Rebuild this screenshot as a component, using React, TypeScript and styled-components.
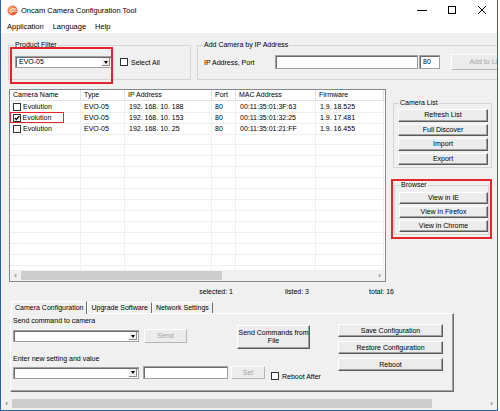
import React from 'react';
import styled, { createGlobalStyle } from 'styled-components';

const GlobalStyle = createGlobalStyle`
  html, body {
    margin: 0;
    padding: 0;
    background: #fff;
  }
  body {
    font-family: "Liberation Sans", Arial, sans-serif;
    font-size: 7px;
    color: #000;
  }
  * {
    box-sizing: border-box;
  }
`;

const Window = styled.div`
  width: 498px;
  height: 411px;
  border: 1px solid #2b64ad;
  border-top: none;
  display: flex;
  flex-direction: column;
  overflow: hidden;
  background: #f0f0f0;
`;

const TitleBar = styled.div`
  height: 20px;
  flex-shrink: 0;
  display: flex;
  align-items: center;
  padding-left: 6px;
  background: #fff;
`;

const TitleText = styled.span`
  font-size: 7.5px;
  margin-left: 3px;
`;

const Controls = styled.div`
  margin-left: auto;
  display: flex;
  height: 100%;
`;

const ControlButton = styled.div`
  width: 30px;
  height: 100%;
  display: flex;
  align-items: center;
  justify-content: center;
`;

const MenuBar = styled.div`
  height: 13px;
  flex-shrink: 0;
  display: flex;
  align-items: center;
  padding-left: 2px;
  background: #fff;
`;

const MenuItem = styled.span`
  font-size: 7.5px;
  padding: 0 4px;
`;

const Body = styled.div`
  flex: 1;
  min-height: 0;
  display: flex;
  flex-direction: column;
  overflow: hidden;
`;

const TopRow = styled.div`
  display: flex;
  gap: 6px;
  padding-left: 7px;
  margin-top: 8px;
  flex-shrink: 0;
`;

const GroupBox = styled.fieldset<{ $w: number; $h?: number }>`
  position: relative;
  margin: 0;
  padding: 0 3px;
  min-width: 0;
  flex-shrink: 0;
  width: ${(p) => p.$w}px;
  ${(p) => (p.$h ? `height: ${p.$h}px;` : '')}
  border: 1px solid #d5d5d5;
`;

const Legend = styled.legend`
  font-size: 7px;
  line-height: 8px;
  padding: 0 1px;
  margin-left: 2px;
`;

// red marker drawn over the product filter box
const Annotation = styled.div`
  position: absolute;
  left: 1px;
  top: -2px;
  width: 103px;
  height: 37px;
  border: 2px solid #e3262b;
  pointer-events: none;
`;

const FilterRow = styled.div`
  display: flex;
  align-items: center;
  margin-top: 7px;
  margin-left: 3px;
`;

const Combo = styled.div<{ $w: number }>`
  width: ${(p) => p.$w}px;
  height: 12px;
  display: flex;
  align-items: stretch;
  background: #fff;
  border: 1px solid #a0a0a0;
  box-shadow: inset 1px 1px #6d6d6d;
  flex-shrink: 0;
`;

const ComboText = styled.span`
  flex: 1;
  padding-left: 3px;
  line-height: 10px;
  font-size: 7px;
`;

const ComboArrow = styled.div`
  width: 9px;
  margin: 1px;
  background: #f0f0f0;
  border-left: 1px solid #fff;
  box-shadow: inset -1px -1px #8a8a8a;
  display: flex;
  align-items: center;
  justify-content: center;

  &::after {
    content: '';
    border-left: 2.5px solid transparent;
    border-right: 2.5px solid transparent;
    border-top: 3px solid #000;
  }
`;

const CheckLabel = styled.label<{ $gap?: number }>`
  display: flex;
  align-items: center;
  margin-left: ${(p) => p.$gap ?? 0}px;
  font-size: 7px;
  gap: 3px;
`;

const Box = styled.span`
  width: 8px;
  height: 8px;
  background: #fff;
  border: 1px solid #333;
  display: inline-flex;
  align-items: center;
  justify-content: center;
  flex-shrink: 0;
`;

const AddRow = styled.div`
  display: flex;
  align-items: center;
  margin-top: 5px;
  margin-left: 3px;
`;

const FieldLabel = styled.span`
  width: 71px;
  font-size: 7px;
`;

const TextInput = styled.div<{ $w: number; $h?: number }>`
  width: ${(p) => p.$w}px;
  height: ${(p) => p.$h ?? 14}px;
  background: #fff;
  border: 1px solid #a0a0a0;
  box-shadow: inset 1px 1px #6d6d6d;
  padding-left: 3px;
  line-height: 12px;
  font-size: 7px;
  flex-shrink: 0;
`;

const Button = styled.div<{ $w: number; $h?: number; $disabled?: boolean }>`
  width: ${(p) => p.$w}px;
  height: ${(p) => p.$h ?? 13}px;
  flex-shrink: 0;
  display: flex;
  align-items: center;
  justify-content: center;
  text-align: center;
  line-height: 8px;
  font-size: 7px;
  color: ${(p) => (p.$disabled ? '#a3a3a3' : '#000')};
  background: #ececec;
  border: 1px solid;
  border-color: ${(p) =>
    p.$disabled ? '#fff #b5b5b5 #b5b5b5 #fff' : '#fff #5a5a5a #5a5a5a #fff'};
  box-shadow: ${(p) =>
    p.$disabled ? 'none' : 'inset -1px -1px #a0a0a0'};
`;

const MiddleRow = styled.div`
  display: flex;
  align-items: flex-start;
  padding-left: 8px;
  margin-top: 9px;
  flex-shrink: 0;
`;

const Table = styled.div`
  width: 377px;
  height: 193px;
  background: #fff;
  border: 1px solid #828790;
  display: flex;
  flex-direction: column;
  overflow: hidden;
  flex-shrink: 0;
`;

const COLS = '71px 44px 87px 24px 80px 68px 1fr';

const HeaderRow = styled.div`
  display: grid;
  grid-template-columns: ${COLS};
  height: 11px;
  flex-shrink: 0;
`;

const HeaderCell = styled.div`
  border-right: 1px solid #e3e3e3;
  border-bottom: 1px solid #e3e3e3;
  padding-left: 3px;
  line-height: 10px;
  font-size: 7px;
  white-space: nowrap;
`;

const Rows = styled.div`
  flex: 1;
  min-height: 0;
  overflow: hidden;
`;

const Row = styled.div`
  display: grid;
  grid-template-columns: ${COLS};
  height: 11px;
`;

const Cell = styled.div`
  border-right: 1px solid #efefef;
  border-bottom: 1px solid #efefef;
  padding-left: 4px;
  line-height: 10px;
  font-size: 7px;
  white-space: nowrap;
  display: flex;
  align-items: center;
`;

const NameCell = styled(Cell)`
  padding-left: 0;
`;

const NameBox = styled.div<{ $marked?: boolean }>`
  display: flex;
  align-items: center;
  gap: 2px;
  width: 54px;
  height: 11px;
  padding-left: 3px;
  border: ${(p) => (p.$marked ? '1.5px solid #e3262b' : 'none')};
  ${(p) => (p.$marked ? 'padding-left: 1.5px;' : '')}
`;

const HScroll = styled.div<{ $h: number }>`
  height: ${(p) => p.$h}px;
  flex-shrink: 0;
  display: flex;
  align-items: center;
  background: #f0f0f0;
`;

const ScrollArrow = styled.span`
  width: 11px;
  text-align: center;
  font-size: 8px;
  color: #555;
`;

const Thumb = styled.div<{ $w: number }>`
  width: ${(p) => p.$w}px;
  height: 9px;
  background: #cdcdcd;
`;

const Spacer = styled.div`
  flex: 1;
`;

const SideColumn = styled.div`
  display: flex;
  flex-direction: column;
  margin-left: 5px;
  margin-top: 10px;
`;

const ButtonStack = styled.div<{ $top: number; $gap: number }>`
  display: flex;
  flex-direction: column;
  gap: ${(p) => p.$gap}px;
  margin-top: ${(p) => p.$top}px;
  margin-left: 1px;
  padding-bottom: 2px;
`;

const SideGroup = styled(GroupBox)`
  margin-left: 2px;
`;

const RedFrame = styled.div`
  margin-top: 11px;
  border: 2px solid #e3262b;
  padding: 0 1px 2px 1px;
  width: 101px;
`;

const StatusRow = styled.div`
  display: grid;
  grid-template-columns: 232px 76px 85px;
  margin-top: 6px;
  line-height: 8px;
  font-size: 7px;
  flex-shrink: 0;
`;

const StatusCell = styled.span`
  text-align: right;
`;

const TabStrip = styled.div`
  display: flex;
  align-items: flex-end;
  height: 13px;
  margin-top: 4px;
  margin-left: 10px;
  flex-shrink: 0;
  position: relative;
  z-index: 1;
`;

const Tab = styled.div<{ $active?: boolean }>`
  height: ${(p) => (p.$active ? 13 : 11)}px;
  padding: 0 3px;
  line-height: ${(p) => (p.$active ? 12 : 10)}px;
  font-size: 7px;
  white-space: nowrap;
  background: #f0f0f0;
  border-top: 1px solid #fff;
  border-left: 1px solid #fff;
  border-right: 1px solid #6d6d6d;
  margin-bottom: ${(p) => (p.$active ? -1 : 0)}px;
`;

const Panel = styled.div`
  width: 444px;
  height: 79px;
  margin-left: 9px;
  flex-shrink: 0;
  border: 1px solid;
  border-color: #fff #6d6d6d #6d6d6d #fff;
  box-shadow: inset -1px -1px #a0a0a0;
  display: flex;
  padding-left: 2px;
`;

const PanelLeft = styled.div`
  width: 325px;
  display: flex;
  flex-direction: column;
`;

const Block = styled.div`
  display: flex;
  align-items: flex-start;
`;

const BlockColumn = styled.div`
  display: flex;
  flex-direction: column;
`;

const SmallLabel = styled.span<{ $top: number }>`
  margin-top: ${(p) => p.$top}px;
  line-height: 8px;
  font-size: 7px;
`;

const InlineRow = styled.div<{ $top: number }>`
  display: flex;
  align-items: center;
  margin-top: ${(p) => p.$top}px;
`;

const PanelRight = styled.div`
  display: flex;
  flex-direction: column;
  gap: 4px;
  margin-top: 10px;
`;

const BottomScroll = styled(HScroll)`
  margin-top: auto;
  margin-bottom: 1px;
`;

const AppIcon = () => (
  <svg width="11" height="11" viewBox="0 0 11 11">
    <defs>
      <radialGradient id="og" cx="0.35" cy="0.35" r="0.8">
        <stop offset="0" stopColor="#fbb36a" />
        <stop offset="1" stopColor="#e2381f" />
      </radialGradient>
    </defs>
    <circle cx="5.5" cy="5.5" r="5" fill="url(#og)" />
    <path d="M2 6.5 Q5 2.5 9.5 4" stroke="#fff" strokeWidth="0.9" fill="none" />
    <path d="M2.5 8.3 Q5.5 5 9.8 6.2" stroke="#fff" strokeWidth="0.8" fill="none" />
  </svg>
);

const CheckMark = () => (
  <svg width="6" height="6" viewBox="0 0 6 6">
    <path d="M0.8 3 L2.4 4.6 L5.3 1" stroke="#000" strokeWidth="1.2" fill="none" />
  </svg>
);

type Camera = {
  name: string;
  type: string;
  ip: string;
  port: string;
  mac: string;
  firmware: string;
  checked?: boolean;
};

const cameras: Camera[] = [
  { name: 'Evolution', type: 'EVO-05', ip: '192. 168. 10. 188', port: '80', mac: '00:11:35:01:3F:63', firmware: '1.9. 18.525' },
  { name: 'Evolution', type: 'EVO-05', ip: '192. 168. 10. 153', port: '80', mac: '00:11:35:01:32:25', firmware: '1.9. 17.481', checked: true },
  { name: 'Evolution', type: 'EVO-05', ip: '192. 168. 10. 25', port: '80', mac: '00:11:35:01:21:FF', firmware: '1.9. 16.455' },
];

const headers = ['Camera Name', 'Type', 'IP Address', 'Port', 'MAC Address', 'Firmware', ''];

const App = () => {
  const empty = Array.from({ length: 13 });

  return (
    <>
      <GlobalStyle />
      <Window>
        <TitleBar>
          <AppIcon />
          <TitleText>Oncam Camera Configuration Tool</TitleText>
          <Controls>
            <ControlButton>
              <svg width="10" height="10" viewBox="0 0 10 10">
                <line x1="0" y1="5.5" x2="10" y2="5.5" stroke="#000" strokeWidth="1" />
              </svg>
            </ControlButton>
            <ControlButton>
              <svg width="10" height="10" viewBox="0 0 10 10">
                <rect x="1.5" y="1.5" width="7" height="7" stroke="#000" strokeWidth="1" fill="none" />
              </svg>
            </ControlButton>
            <ControlButton>
              <svg width="10" height="10" viewBox="0 0 10 10">
                <path d="M1 1 L9 9 M9 1 L1 9" stroke="#000" strokeWidth="1" />
              </svg>
            </ControlButton>
          </Controls>
        </TitleBar>

        <MenuBar>
          <MenuItem>Application</MenuItem>
          <MenuItem style={{ marginLeft: 1 }}>Language</MenuItem>
          <MenuItem style={{ marginLeft: 1 }}>Help</MenuItem>
        </MenuBar>

        <Body>
          <TopRow>
            <GroupBox $w={183} $h={39}>
              <Legend>Product Filter</Legend>
              <Annotation />
              <FilterRow>
                <Combo $w={97}>
                  <ComboText>EVO-05</ComboText>
                  <ComboArrow />
                </Combo>
                <CheckLabel $gap={8}>
                  <Box />
                  Select All
                </CheckLabel>
              </FilterRow>
            </GroupBox>

            <GroupBox $w={330} $h={39}>
              <Legend>Add Camera by IP Address</Legend>
              <AddRow>
                <FieldLabel>IP Address, Port</FieldLabel>
                <TextInput $w={143} />
                <TextInput $w={21} style={{ marginLeft: 1 }}>80</TextInput>
                <Button $w={70} $h={16} $disabled style={{ marginLeft: 11 }}>
                  Add to List
                </Button>
              </AddRow>
            </GroupBox>
          </TopRow>

          <MiddleRow>
            <Table>
              <HeaderRow>
                {headers.map((h, i) => (
                  <HeaderCell key={i}>{h}</HeaderCell>
                ))}
              </HeaderRow>
              <Rows>
                {cameras.map((c) => (
                  <Row key={c.ip}>
                    <NameCell>
                      <NameBox $marked={c.checked}>
                        <Box>{c.checked && <CheckMark />}</Box>
                        {c.name}
                      </NameBox>
                    </NameCell>
                    <Cell style={{ paddingLeft: 3 }}>{c.type}</Cell>
                    <Cell>{c.ip}</Cell>
                    <Cell style={{ paddingLeft: 3 }}>{c.port}</Cell>
                    <Cell>{c.mac}</Cell>
                    <Cell>{c.firmware}</Cell>
                    <Cell />
                  </Row>
                ))}
                {empty.map((_, i) => (
                  <Row key={i}>
                    {headers.map((_, j) => (
                      <Cell key={j} />
                    ))}
                  </Row>
                ))}
              </Rows>
              <HScroll $h={11}>
                <ScrollArrow>‹</ScrollArrow>
                <Thumb $w={201} />
                <Spacer />
                <ScrollArrow>›</ScrollArrow>
              </HScroll>
            </Table>

            <SideColumn>
              <SideGroup $w={99}>
                <Legend>Camera List</Legend>
                <ButtonStack $top={2} $gap={2}>
                  <Button $w={90} $h={12.5}>Refresh List</Button>
                  <Button $w={90} $h={12.5}>Full Discover</Button>
                  <Button $w={90} $h={12.5}>Import</Button>
                  <Button $w={90} $h={12.5}>Export</Button>
                </ButtonStack>
              </SideGroup>

              <RedFrame>
                <GroupBox $w={95}>
                  <Legend>Browser</Legend>
                  <ButtonStack $top={3} $gap={2}>
                    <Button $w={89} $h={12}>View in IE</Button>
                    <Button $w={89} $h={12}>View in Firefox</Button>
                    <Button $w={89} $h={12}>View in Chrome</Button>
                  </ButtonStack>
                </GroupBox>
              </RedFrame>
            </SideColumn>
          </MiddleRow>

          <StatusRow>
            <StatusCell>selected: 1</StatusCell>
            <StatusCell>listed: 3</StatusCell>
            <StatusCell>total: 16</StatusCell>
          </StatusRow>

          <TabStrip>
            <Tab $active>Camera Configuration</Tab>
            <Tab>Upgrade Software</Tab>
            <Tab>Network Settings</Tab>
          </TabStrip>

          <Panel>
            <PanelLeft>
              <Block>
                <BlockColumn>
                  <SmallLabel $top={3}>Send command to camera</SmallLabel>
                  <InlineRow $top={4}>
                    <Combo $w={126}>
                      <ComboText />
                      <ComboArrow />
                    </Combo>
                    <Button $w={43} $h={14} $disabled style={{ marginLeft: 5 }}>
                      Send
                    </Button>
                  </InlineRow>
                </BlockColumn>
                <Button $w={73} $h={24} style={{ marginLeft: 50, marginTop: 11 }}>
                  Send Commands from
                  <br />
                  File
                </Button>
              </Block>
              <BlockColumn>
                <SmallLabel $top={6}>Enter new setting and value</SmallLabel>
                <InlineRow $top={2}>
                  <Combo $w={126}>
                    <ComboText />
                    <ComboArrow />
                  </Combo>
                  <TextInput $w={85} $h={13} style={{ marginLeft: 4 }} />
                  <Button $w={34} $h={13} $disabled style={{ marginLeft: 3 }}>
                    Set
                  </Button>
                  <CheckLabel $gap={6} style={{ marginTop: 7 }}>
                    <Box />
                    Reboot After
                  </CheckLabel>
                </InlineRow>
              </BlockColumn>
            </PanelLeft>
            <PanelRight>
              <Button $w={105}>Save Configuration</Button>
              <Button $w={105}>Restore Configuration</Button>
              <Button $w={105}>Reboot</Button>
            </PanelRight>
          </Panel>

          <BottomScroll $h={12}>
            <ScrollArrow>‹</ScrollArrow>
            <Thumb $w={420} />
            <Spacer />
            <ScrollArrow>›</ScrollArrow>
          </BottomScroll>
        </Body>
      </Window>
    </>
  );
};

export default App;
